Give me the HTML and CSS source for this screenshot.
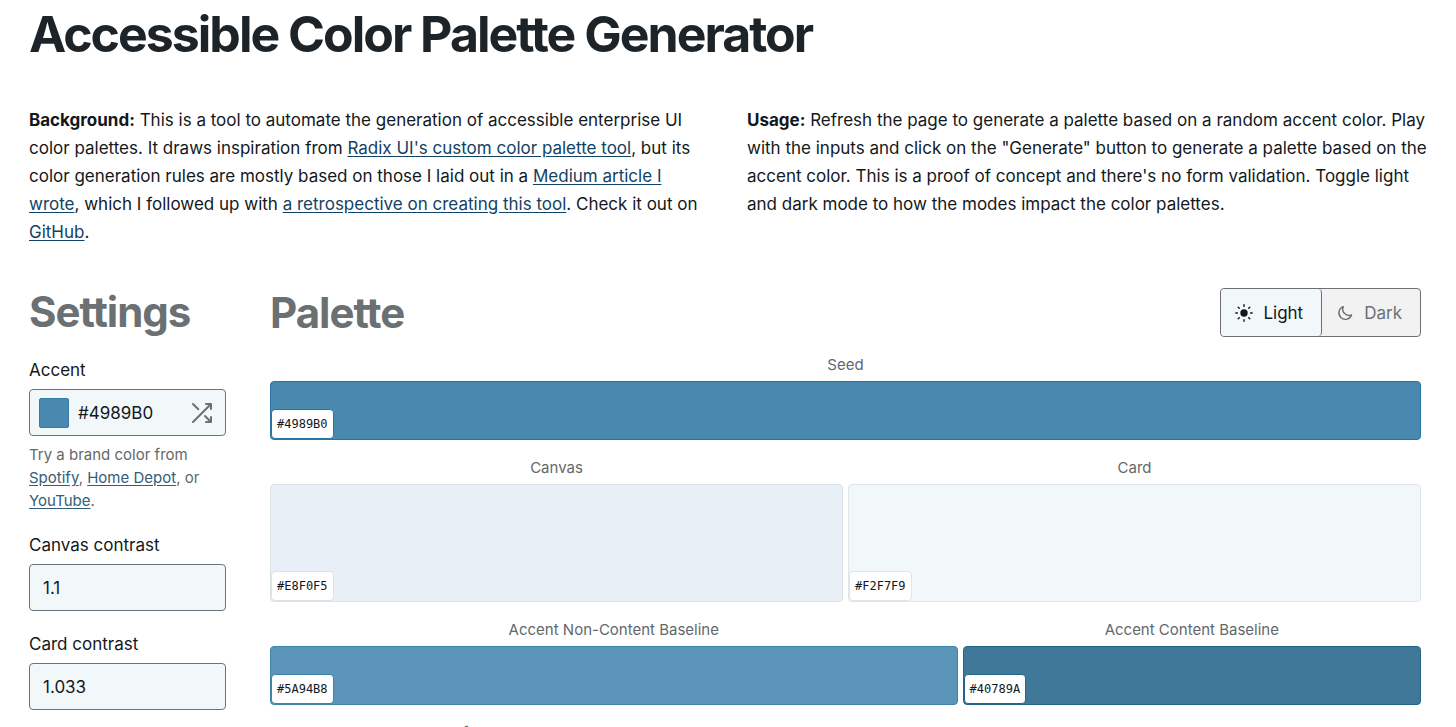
FILE: index.html
```html
<!DOCTYPE html>
<html lang="en">
<head>
    <meta charset="UTF-8">
    <title>Accessible Color Palette Generator</title>
    <link rel="stylesheet" href="styles.css">
</head>
<body>
    <header>
        <h1>Accessible Color Palette Generator</h1>
        <div class="intro">
            <p><strong>Background:</strong> This is a tool to automate the generation of accessible enterprise UI<br>
            color palettes. It draws inspiration from <a href="#">Radix UI's custom color palette tool</a>, but its<br>
            color generation rules are mostly based on those I laid out in a <a href="#">Medium article I<br>
            wrote</a>, which I followed up with <a href="#">a retrospective on creating this tool</a>. Check it out on<br>
            <a href="#">GitHub</a>.</p>
            <p><strong>Usage:</strong> Refresh the page to generate a palette based on a random accent color. Play<br>
            with the inputs and click on the "Generate" button to generate a palette based on the<br>
            accent color. This is a proof of concept and there's no form validation. Toggle light<br>
            and dark mode to how the modes impact the color palettes.</p>
        </div>
    </header>
    <main>
        <form class="settings">
            <h2>Settings</h2>
            <div class="field">
                <label for="accent">Accent</label>
                <div class="accent-box">
                    <span class="accent-swatch"></span>
                    <input type="text" id="accent" value="#4989B0">
                    <button type="button" class="btn-shuffle" aria-label="Random color">
                        <svg width="24" height="24" viewBox="0 0 24 24" fill="none" stroke="currentColor" stroke-width="2" stroke-linecap="round" stroke-linejoin="round">
                            <path d="M3 3L8.300 8.300M3 21L21 3M16 3H21V8M15 15L21 21M21 16V21H16"/>
                        </svg>
                    </button>
                </div>
                <p class="hint">Try a brand color from <a href="#">Spotify</a>, <a href="#">Home Depot</a>, or <a href="#">YouTube</a>.</p>
            </div>
            <div class="field">
                <label for="canvasContrast">Canvas contrast</label>
                <input type="text" class="text-input" id="canvasContrast" value="1.1">
            </div>
            <div class="field">
                <label for="cardContrast">Card contrast</label>
                <input type="text" class="text-input" id="cardContrast" value="1.033">
            </div>
        </form>
        <section class="palette">
            <div class="palette-head">
                <h2>Palette</h2>
                <div class="modes">
                    <button type="button" class="mode mode-active">
                        <svg width="20" height="20" viewBox="0 0 20 20" fill="none" stroke="currentColor" stroke-width="1.4" stroke-linecap="round">
                            <circle cx="10" cy="10" r="3.7" fill="currentColor" stroke="none"/>
                            <path d="M10 1.800V3.400M10 16.600V18.200M1.800 10H3.400M16.600 10H18.200M4.200 4.200L5.300 5.300M14.700 14.700L15.800 15.800M4.200 15.800L5.300 14.700M14.700 5.300L15.800 4.200"/>
                        </svg>
                        Light
                    </button>
                    <button type="button" class="mode">
                        <svg width="20" height="20" viewBox="0 0 20 20" fill="none" stroke="currentColor" stroke-width="1.4" stroke-linejoin="round">
                            <path d="M8.300 3.700A6.500 6.500 0 1 0 16.600 11.800A6.200 6.200 0 0 1 8.300 3.700Z"/>
                        </svg>
                        Dark
                    </button>
                </div>
            </div>
            <div class="swatches">
                <figure class="swatch seed">
                    <figcaption>Seed</figcaption>
                    <div class="color"><code>#4989B0</code></div>
                </figure>
            </div>
            <div class="swatches">
                <figure class="swatch canvas">
                    <figcaption>Canvas</figcaption>
                    <div class="color color-tall"><code>#E8F0F5</code></div>
                </figure>
                <figure class="swatch card">
                    <figcaption>Card</figcaption>
                    <div class="color color-tall"><code>#F2F7F9</code></div>
                </figure>
            </div>
            <div class="swatches">
                <figure class="swatch wide non-content">
                    <figcaption>Accent Non-Content Baseline</figcaption>
                    <div class="color"><code>#5A94B8</code></div>
                </figure>
                <figure class="swatch narrow content">
                    <figcaption>Accent Content Baseline</figcaption>
                    <div class="color"><code>#40789A</code></div>
                </figure>
            </div>
            <div class="swatches">
                <figure class="swatch"><figcaption>Accent Non-Content Soft</figcaption></figure>
                <figure class="swatch"><figcaption>Accent Non-Content Subdued</figcaption></figure>
                <figure class="swatch"><figcaption>Accent Non-Content Strong</figcaption></figure>
                <figure class="swatch"><figcaption>Accent Content Subdued</figcaption></figure>
                <figure class="swatch"><figcaption>Accent Content Strong</figcaption></figure>
            </div>
        </section>
    </main>
</body>
</html>
```
FILE: styles.css
```css
* {
    box-sizing: border-box;
}
html {
    height: 100%;
    overflow: hidden;
}
body {
    margin: 0;
    padding: 4px 35px 0 29px;
    height: 100%;
    overflow: hidden;
    background: #fff;
    color: #12181c;
    font-family: Inter, "Liberation Sans", sans-serif;
    font-size: 17px;
    line-height: 28px;
}
h1, h2, p, figure {
    margin: 0;
}
h1 {
    color: #1d2429;
    font-size: 50px;
    line-height: 60px;
    letter-spacing: -2px;
}
h2 {
    color: #6b7073;
    font-size: 42px;
    line-height: 48px;
    letter-spacing: -1px;
}
a {
    color: #124264;
    text-decoration: underline;
    text-underline-offset: 2px;
}
.intro {
    display: grid;
    grid-template-columns: 1fr 1fr;
    column-gap: 44px;
    margin-top: 42px;
    white-space: nowrap;
}
.intro p {
    min-width: 0;
}
main {
    display: grid;
    grid-template-columns: 197px 1fr;
    column-gap: 44px;
    margin-top: 42px;
}
.field {
    margin-bottom: 19px;
}
.settings h2 {
    margin-bottom: 20px;
}
.field label {
    display: block;
    margin-bottom: 5px;
}
.text-input, .accent-box {
    width: 100%;
    height: 47px;
    border: 1px solid #6b7479;
    border-radius: 4px;
    background: #f2f7f9;
}
input {
    color: #12181c;
    font: inherit;
}
.text-input {
    display: block;
    padding: 0 13px;
}
.accent-box {
    display: flex;
    align-items: center;
    padding: 0 11px 0 9px;
}
.accent-box input {
    flex: 1;
    min-width: 0;
    padding: 0 0 0 9px;
    border: 0;
    background: none;
}
.accent-swatch {
    width: 30px;
    height: 30px;
    border: 1px solid #337aa6;
    border-radius: 2px;
    background: #4989b0;
}
.btn-shuffle {
    display: flex;
    padding: 0;
    border: 0;
    background: none;
    color: #6b7073;
}
.hint {
    margin-top: 7px;
    color: #63686b;
    font-size: 15px;
    line-height: 23px;
}
.hint a {
    color: #355c78;
}
.palette-head {
    display: flex;
    align-items: center;
    justify-content: space-between;
    margin-bottom: 16px;
}
.modes {
    display: flex;
    border: 1px solid #6b7073;
    border-radius: 4px;
    background: #f2f2f2;
}
.mode {
    display: flex;
    align-items: center;
    gap: 9px;
    height: 47px;
    padding: 0 18px 0 13px;
    border: 0;
    background: none;
    color: #6b7073;
    font: inherit;
}
.mode-active {
    border-right: 1px solid #6b7073;
    border-radius: 4px;
    background: #f2f7f9;
    color: #12181c;
}
.swatches {
    display: flex;
    gap: 5px;
    margin-bottom: 16px;
}
.swatch {
    flex: 1 1 0;
    min-width: 0;
}
.swatch.wide {
    flex-grow: 3;
}
.swatch.narrow {
    flex-grow: 2;
}
figcaption {
    margin-bottom: 4px;
    color: #63686b;
    font-size: 15px;
    line-height: 24px;
    text-align: center;
    white-space: nowrap;
}
.color {
    display: flex;
    align-items: flex-end;
    height: 59px;
    border: 1px solid;
    border-radius: 4px;
}
.color-tall {
    height: 118px;
}
code {
    padding: 0 5px;
    border: 1px solid;
    border-color: inherit;
    border-radius: 4px;
    background: #fff;
    color: #12181c;
    font-family: "DejaVu Sans Mono", monospace;
    font-size: 12px;
    line-height: 28px;
}
.seed .color {
    border-color: #2874a3;
    background: #4989b0;
}
.canvas .color {
    border-color: #d9e3e8;
    background: #e8eff6;
}
.card .color {
    border-color: #dfe6e9;
    background: #f2f7f9;
}
.non-content .color {
    border-color: #3f82ac;
    background: #5a94b8;
}
.content .color {
    border-color: #24658c;
    background: #40789a;
}
```
